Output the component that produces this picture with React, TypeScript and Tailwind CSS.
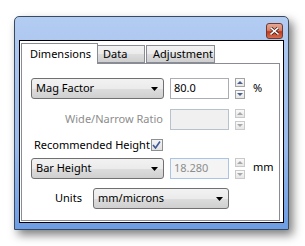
import React from "react";

const font = { fontFamily: '"Noto Sans", "DejaVu Sans", sans-serif' };

function Arrow({ color = "#000" }: { color?: string }) {
  return (
    <svg width="7" height="4" viewBox="0 0 7 4">
      <polygon points="0,0 7,0 3.5,4" fill={color} />
    </svg>
  );
}

function Combo({ label, className }: { label: string; className: string }) {
  return (
    <div
      className={
        "flex h-[21px] items-center justify-between rounded-[3px] border border-[#707070] bg-[linear-gradient(#f2f2f2_0%,#ebebeb_50%,#dddddd_51%,#cfcfcf_100%)] pl-[4px] pr-[5px] text-[11px] text-black " +
        className
      }
    >
      <span>{label}</span>
      <Arrow />
    </div>
  );
}

function Spin({ disabled }: { disabled?: boolean }) {
  const border = disabled ? "border-[#c9c9c9]" : "border-[#a3a3a3]";
  const color = disabled ? "#a8a8a8" : "#4a5f8a";
  return (
    <div className="flex h-[21px] w-[10px] flex-col justify-between">
      <div className={"flex h-[9px] w-[10px] items-center justify-center border bg-[linear-gradient(#fafafa,#e6e6e6)] " + border}>
        <svg width="6" height="3" viewBox="0 0 6 3">
          <polygon points="0,3 6,3 3,0" fill={color} />
        </svg>
      </div>
      <div className={"flex h-[9px] w-[10px] items-center justify-center border bg-[linear-gradient(#fafafa,#e6e6e6)] " + border}>
        <svg width="6" height="3" viewBox="0 0 6 3">
          <polygon points="0,0 6,0 3,3" fill={color} />
        </svg>
      </div>
    </div>
  );
}

export default function App() {
  return (
    <div className="h-[246px] w-[305px] bg-white pl-[14px] pt-[16px]" style={font}>
      <div className="flex h-[214px] w-[275px] flex-col rounded-t-[5px] border border-[#3a4a5e] bg-[linear-gradient(#b3ccf2_0%,#a6c2ee_30%,#9bbbec_60%,#6d9de4_100%)] shadow-[4px_5px_10px_rgba(0,0,0,0.5)]">
        {/* title bar */}
        <div className="flex h-[23px] items-start justify-end pr-[5px] pt-[6px]">
          <div className="flex h-[16px] w-[17px] items-center justify-center rounded-[3px] border border-[#6e3a30] bg-[linear-gradient(#e8a793_0%,#d9806a_45%,#c2371b_55%,#d86c4f_100%)]">
            <svg width="9" height="8" viewBox="0 0 9 8">
              <path d="M1 1 L8 7 M8 1 L1 7" stroke="#3a1a14" strokeWidth="3" strokeLinecap="square" />
              <path d="M1 1 L8 7 M8 1 L1 7" stroke="#ffffff" strokeWidth="1.6" strokeLinecap="square" />
            </svg>
          </div>
        </div>
        {/* client */}
        <div className="mx-[4px] flex h-[183px] flex-col border border-black bg-white pl-[1px] pr-[3px] pb-[1px]">
          {/* tabs */}
          <div className="flex h-[22px] items-end pt-[2px]">
            <div className="relative z-10 -mb-px flex h-[21px] w-[77px] items-center border border-b-0 border-[#898c95] bg-white pl-[8px] text-[11px] text-black">
              Dimensions
            </div>
            <div className="flex h-[18px] w-[47px] items-center border border-l-0 border-[#898c95] bg-[linear-gradient(#f2f2f2_0%,#ebebeb_50%,#dddddd_51%,#cfcfcf_100%)] pl-[5px] text-[11px] text-black">
              Data
            </div>
            <div className="ml-px flex h-[18px] w-[69px] items-center border border-[#898c95] bg-[linear-gradient(#f2f2f2_0%,#ebebeb_50%,#dddddd_51%,#cfcfcf_100%)] pl-[6px] text-[11px] text-black">
              Adjustment
            </div>
          </div>
          {/* panel */}
          <div className="flex flex-1 flex-col border border-[#898c95] bg-white pl-[9px] pt-[14px] text-[11px]">
            {/* row 1 */}
            <div className="flex h-[21px] items-center">
              <Combo label="Mag Factor" className="w-[133px]" />
              <div className="ml-[6px] flex h-[21px] w-[59px] items-center border border-[#abadb3] bg-white pl-[3px] text-[11px] text-black">
                80.0
              </div>
              <div className="ml-[6px]">
                <Spin />
              </div>
              <span className="ml-[8px] text-black">%</span>
            </div>
            {/* row 2 */}
            <div className="mt-[10px] flex h-[21px] items-center">
              <div className="w-[133px] pr-[1px] text-right text-[#8d8d8d]">Wide/Narrow Ratio</div>
              <div className="ml-[6px] h-[21px] w-[59px] border border-[#b8c2cc] bg-[#f0f0f0]" />
              <div className="ml-[6px]">
                <Spin disabled />
              </div>
            </div>
            {/* row 3 */}
            <div className="mt-[9px] flex h-[12px] items-center">
              <span className="ml-[3px] text-black">Recommended Height</span>
              <div className="ml-px flex h-[12px] w-[12px] items-center justify-center border border-[#8e8f8f] bg-[linear-gradient(#f4f4f4,#e2e2e2)]">
                <svg width="9" height="8" viewBox="0 0 9 8">
                  <path d="M1 4 L3.5 7 L8 0.5" stroke="#3d5a99" strokeWidth="1.6" fill="none" />
                </svg>
              </div>
            </div>
            {/* row 4 */}
            <div className="mt-[7px] flex h-[21px] items-center">
              <Combo label="Bar Height" className="w-[133px]" />
              <div className="ml-[6px] flex h-[21px] w-[59px] items-center border border-[#a9c4e4] bg-[#f4f4f4] pl-[3px] text-[#8d8d8d]">
                18.280
              </div>
              <div className="ml-[6px]">
                <Spin disabled />
              </div>
              <span className="ml-[8px] -mt-[2px] text-black">mm</span>
            </div>
            {/* row 5 */}
            <div className="mt-[9px] flex h-[21px] items-center">
              <span className="ml-[24px] w-[38px] text-black">Units</span>
              <Combo label="mm/microns" className="w-[136px]" />
            </div>
          </div>
        </div>
      </div>
    </div>
  );
}
